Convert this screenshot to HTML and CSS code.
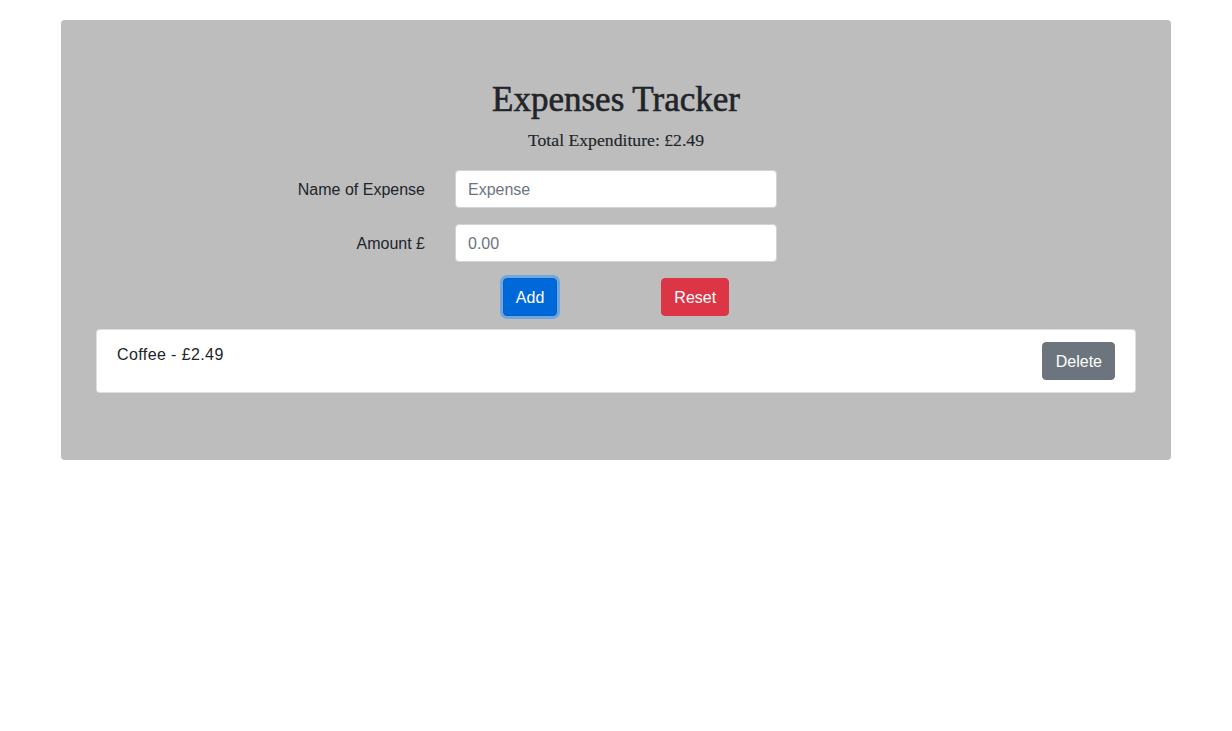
FILE: index.html
```html
<!doctype html>
<html lang="en">
<head>
    <meta charset="utf-8">
    <title>Expenses Tracker</title>
    <link rel="stylesheet" href="styles.css">
</head>

<body>
<!-- Tracker panel -->
<div class="tracker">
    <h1 class="tracker-title">Expenses Tracker</h1>
    <p class="tracker-total">Total Expenditure: £2.49</p>

    <form class="expense-form">
        <label class="form-label" for="expenseName">Name of Expense</label>
        <input class="form-input" type="text" id="expenseName" placeholder="Expense">
        <span></span>

        <label class="form-label" for="expenseAmount">Amount £</label>
        <input class="form-input" type="text" id="expenseAmount" placeholder="0.00">
        <span></span>
    </form>

    <div class="form-actions">
        <button class="btn btn-primary is-focused" type="button">Add</button>
        <button class="btn btn-danger" type="button">Reset</button>
    </div>

    <!-- Expense list -->
    <ul class="expense-list">
        <li class="expense-item">
            <span class="expense-text">Coffee - £2.49</span>
            <button class="btn btn-secondary" type="button">Delete</button>
        </li>
    </ul>
</div>
</body>
</html>
```

FILE: styles.css
```css
/* Expenses tracker */
body {
    margin: 0;
    font-family: "Liberation Sans", Arial, sans-serif;
    font-size: 16px;
    line-height: 1.5;
    color: #212529;
    background-color: #fff;
}

.tracker {
    width: 1110px;
    margin: 20px auto 0;
    padding: 59px 35px 67px;
    box-sizing: border-box;
    background-color: #bdbdbd;
    border-radius: 4px;
}

.tracker-title {
    margin: 0;
    font-family: "Liberation Serif", "Times New Roman", serif;
    font-size: 35px;
    font-weight: 400;
    line-height: 42px;
    text-align: center;
    -webkit-text-stroke: 0.6px #212529;
}

.tracker-total {
    margin: 6px 0 17px;
    font-family: "Liberation Serif", "Times New Roman", serif;
    font-size: 17.7px;
    line-height: 26px;
    text-align: center;
    -webkit-text-stroke: 0.15px #212529;
}

.expense-form {
    display: grid;
    grid-template-columns: 1fr 352px 1fr;
    row-gap: 16px;
    align-items: center;
}

.form-label {
    padding: 2px 15px 0 0;
    text-align: right;
}

.form-input {
    margin: 0 15px;
    height: 38px;
    padding: 7px 12px 5px;
    box-sizing: border-box;
    font-family: inherit;
    font-size: 16px;
    color: #495057;
    background-color: #fff;
    border: 1px solid #ced4da;
    border-radius: 4px;
}

.form-input::placeholder {
    color: #6c757d;
}

.form-actions {
    display: flex;
    justify-content: center;
    gap: 104px;
    margin-top: 16px;
}

.btn {
    height: 38px;
    padding: 7px 12px 5px;
    font-family: inherit;
    font-size: 16px;
    line-height: 24px;
    color: #fff;
    border: 1px solid transparent;
    border-radius: 4px;
}

.btn-primary {
    background-color: #0069d9;
    border-color: #0062cc;
}

.btn-primary.is-focused {
    box-shadow: 0 0 0 3px rgba(38, 143, 255, 0.5);
}

.btn-danger {
    background-color: #dc3545;
    border-color: #dc3545;
}

.btn-secondary {
    padding: 7px 12px 5px 13px;
    background-color: #6c757d;
    border-color: #6c757d;
}

.expense-list {
    list-style: none;
    margin: 13px 0 0;
    padding: 0;
}

.expense-item {
    display: flex;
    justify-content: space-between;
    align-items: flex-start;
    padding: 12px 20px;
    background-color: #fff;
    border: 1px solid rgba(0, 0, 0, 0.125);
    border-radius: 4px;
}

.expense-text {
    padding-top: 1px;
    letter-spacing: 0.4px;
}
```
